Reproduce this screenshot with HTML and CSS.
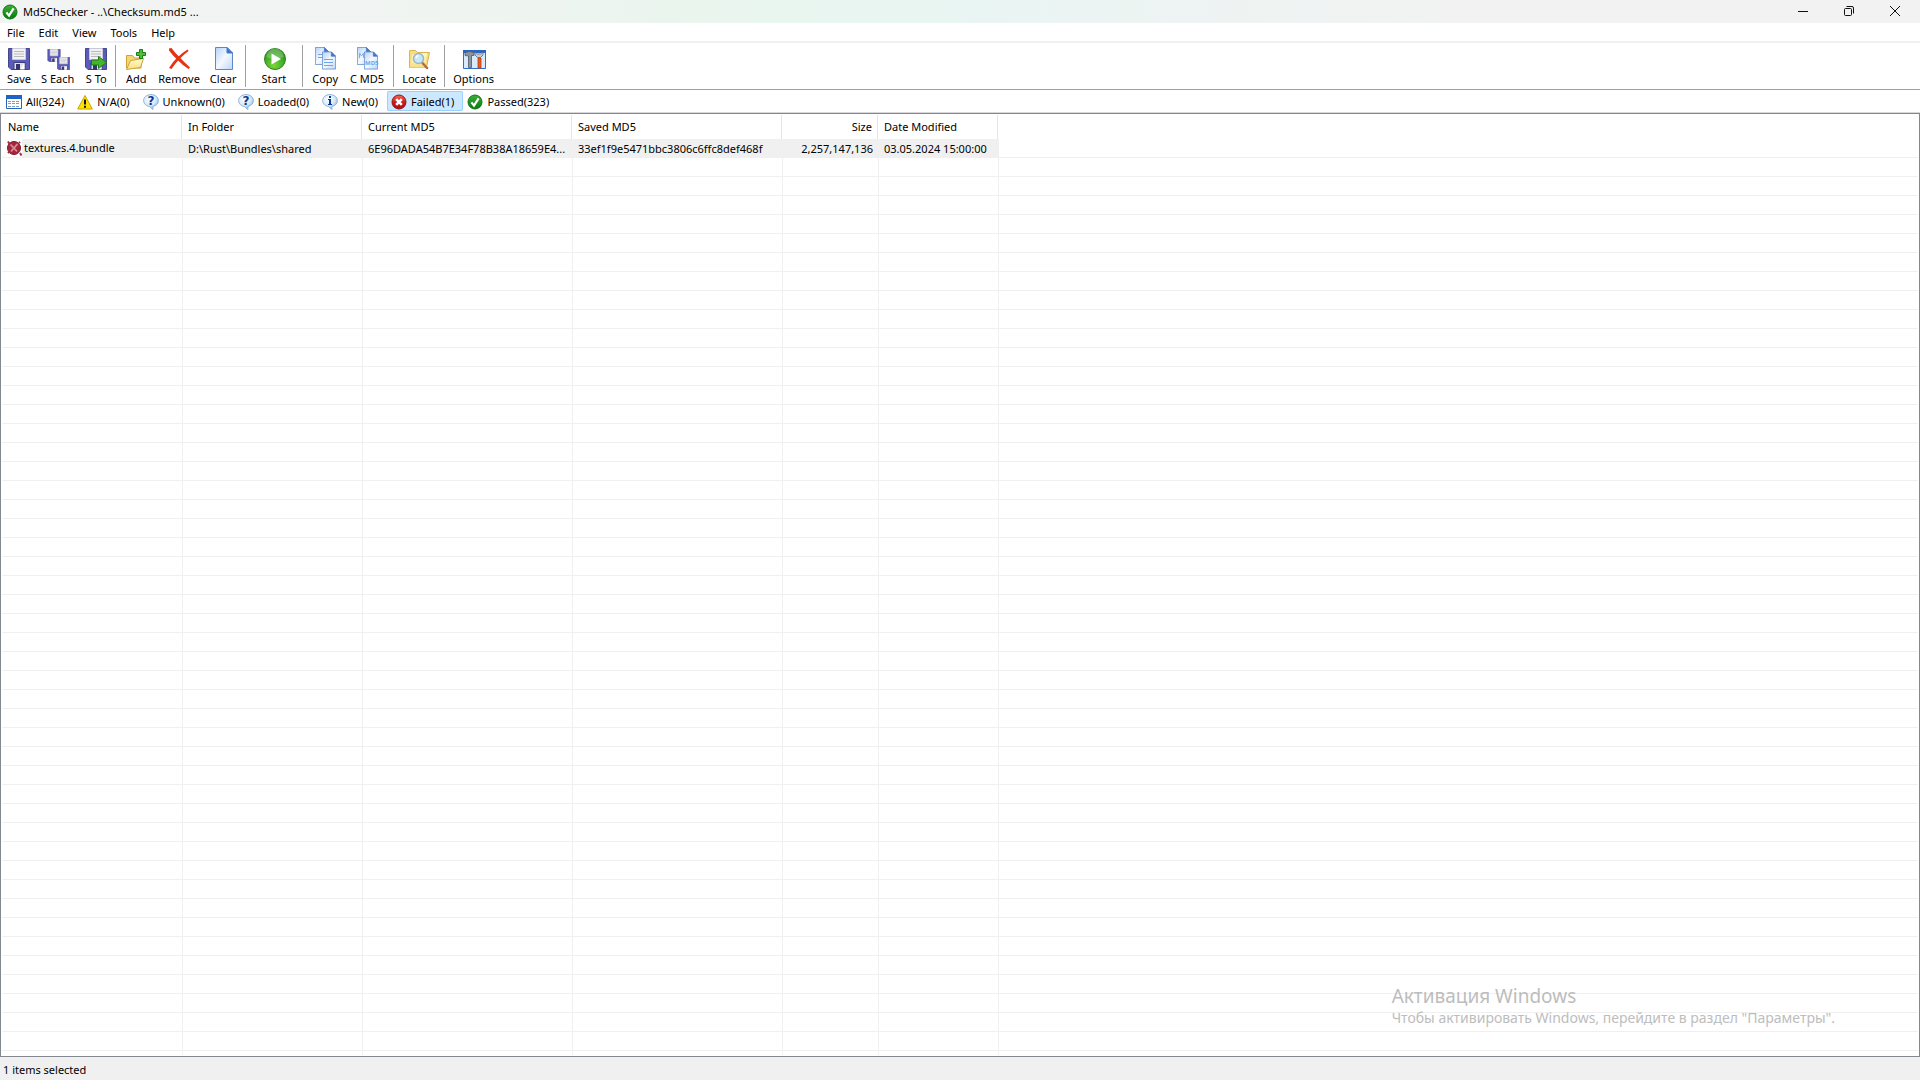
FILE: index.html
```html
<!DOCTYPE html>
<html lang="en">
<head>
    <meta charset="UTF-8">
    <meta name="viewport" content="width=device-width, initial-scale=1.0">
    <title>Md5Checker - ..\Checksum.md5 ...</title>
    <link rel="stylesheet" href="styles.css">
</head>
<body>
    <!-- shared icon shapes -->
    <svg class="defs" aria-hidden="true">
        <defs>
            <linearGradient id="greenBall" x1="0" y1="0" x2="0" y2="1">
                <stop offset="0" stop-color="#3fae3a"/>
                <stop offset="1" stop-color="#067a10"/>
            </linearGradient>
            <linearGradient id="redBall" x1="0" y1="0" x2="0" y2="1">
                <stop offset="0" stop-color="#f06a5c"/>
                <stop offset="0.5" stop-color="#d01c1c"/>
                <stop offset="1" stop-color="#a80c10"/>
            </linearGradient>
            <linearGradient id="paper" x1="0" y1="0" x2="1" y2="1">
                <stop offset="0" stop-color="#b4d2f8"/>
                <stop offset="0.5" stop-color="#f4f9ff"/>
                <stop offset="1" stop-color="#bcd6fa"/>
            </linearGradient>
            <linearGradient id="folderFill" x1="0" y1="0" x2="0" y2="1">
                <stop offset="0" stop-color="#fffbd0"/>
                <stop offset="1" stop-color="#f8de80"/>
            </linearGradient>
            <radialGradient id="bubbleFill" cx="0.4" cy="0.3" r="0.7">
                <stop offset="0" stop-color="#ffffff"/>
                <stop offset="0.6" stop-color="#d6e9fb"/>
                <stop offset="1" stop-color="#8fb9e6"/>
            </radialGradient>
            <radialGradient id="startFill" cx="0.45" cy="0.8" r="0.8">
                <stop offset="0" stop-color="#7ed63a"/>
                <stop offset="0.6" stop-color="#3fab25"/>
                <stop offset="1" stop-color="#2c8a1c"/>
            </radialGradient>
            <symbol id="check" viewBox="0 0 16 16">
                <circle cx="8" cy="8" r="7" fill="url(#greenBall)" stroke="#0c7a14"/>
                <path d="M4.4 8.4 7 11.6 11.6 4.4" fill="none" stroke="#fff" stroke-width="2.2"/>
            </symbol>
            <symbol id="cross" viewBox="0 0 16 16">
                <circle cx="8" cy="8" r="7" fill="url(#redBall)" stroke="#9c1014"/>
                <path d="M5.2 5.2 10.8 10.8M10.8 5.2 5.2 10.8" stroke="#fff" stroke-width="2.6"/>
            </symbol>
            <symbol id="bubble" viewBox="0 0 16 16">
                <path d="M8 .6C3.8.6.6 3.2.6 6.6c0 3.2 2.8 5.6 6.2 6L9.8 15.6 10 12.4c3.2-.7 5.4-3 5.4-5.8C15.4 3.200 12.2.6 8 .6Z" fill="url(#bubbleFill)" stroke="#8fb0d4"/>
            </symbol>
            <symbol id="floppy" viewBox="0 0 22 22">
                <path d="M.5.5h21v21H3L.5 19Z" fill="#5b5cb8" stroke="#45468f"/>
                <path d="M4.5.5h13v11h-13Z" fill="#f2f2f2" stroke="#c9c9dc"/>
                <path d="M6 3.5h10M6 6h10M6 8.5h10" stroke="#b9b9bd"/>
                <path d="M6 14.5h11v7H6Z" fill="#dfe2ea" stroke="#3b3c7c"/>
                <path d="M8 16h4v5.5H8Z" fill="#34356c"/>
                <path d="M12 21.5 16.5 15v6.5Z" fill="#fff"/>
            </symbol>
            <symbol id="page" viewBox="0 0 18 23">
                <path d="M.5.5H12L17.5 6v16.500H.5Z" fill="url(#paper)" stroke="#5f86c8"/>
                <path d="M12 .5V6h5.500Z" fill="#3f74cc" stroke="#4a78c4"/>
            </symbol>
        </defs>
    </svg>

    <header class="titlebar">
        <svg class="app-icon" viewBox="0 0 16 16"><use href="#check"/></svg>
        <h1>Md5Checker - ..\Checksum.md5 ...</h1>
        <div class="window-buttons">
            <button type="button" aria-label="Minimize"><svg viewBox="0 0 12 12"><path d="M1 6.500h10"/></svg></button>
            <button type="button" aria-label="Restore"><svg viewBox="0 0 12 12"><rect x="1.500" y="3.500" width="7" height="7" rx="1"/><path d="M3.500 1.500H9q1.500 0 1.500 1.500v5.500"/></svg></button>
            <button type="button" aria-label="Close"><svg viewBox="0 0 12 12"><path d="M1 1 11 11M11 1 1 11"/></svg></button>
        </div>
    </header>

    <nav class="menu">
        <button type="button">File</button>
        <button type="button">Edit</button>
        <button type="button">View</button>
        <button type="button">Tools</button>
        <button type="button">Help</button>
    </nav>

    <div class="toolbar">
        <div class="tool-group">
            <button type="button">
                <svg viewBox="0 0 24 24"><use href="#floppy" x="1" y="1" width="22" height="22"/></svg>
                Save
            </button>
            <button type="button">
                <svg viewBox="0 0 24 24"><use href="#floppy" x="1" y="2" width="14" height="13"/><use href="#floppy" x="11" y="10" width="13" height="13"/></svg>
                S Each
            </button>
            <button type="button">
                <svg viewBox="0 0 24 24"><use href="#floppy" x="1" y="1" width="22" height="22"/><path d="M7.5 13h7V9.500L22.500 15.500 14.500 21.500V18h-7Z" fill="#43b52c" stroke="#237a18"/></svg>
                S To
            </button>
        </div>
        <div class="tool-group">
            <button type="button">
                <svg viewBox="0 0 24 24">
                    <path d="M2.500 21V8.500h6l2 2.500H17v10Z" fill="#f5d772" stroke="#cfa33a"/>
                    <path d="M2.500 22.500 6.500 13.500 19.500 11.500 16.500 20.500Z" fill="url(#folderFill)" stroke="#cfa33a"/>
                    <path d="M15.500 2.500h3v3h3v3h-3v3h-3v-3h-3v-3h3Z" fill="#4cc038" stroke="#1a7d14"/>
                </svg>
                Add
            </button>
            <button type="button">
                <svg viewBox="0 0 24 24"><path d="M2 1.500 4.500 1C9 7 16 14 23 20.500L21.500 22C14 17 7 10 2 3.500Z" fill="#e63312"/><path d="M20.500 2.500 21.500 4C15 9 9 15 4.500 22L2 21C7 13 13 7 20.500 2.500Z" fill="#e63312"/></svg>
                Remove
            </button>
            <button type="button">
                <svg viewBox="0 0 24 24"><use href="#page" x="4" y="0" width="18" height="23"/></svg>
                Clear
            </button>
        </div>
        <div class="tool-group wide">
            <button type="button">
                <svg viewBox="0 0 24 24">
                    <circle cx="13" cy="12" r="10.500" fill="url(#startFill)" stroke="#2c8420"/>
                    <path d="M4.500 10a8.500 8.500 0 0 1 17 0c-5 2-12 2-17 0Z" fill="#fff" opacity=".25"/>
                    <path d="M9.500 6.500v11L19 12Z" fill="#fff"/>
                </svg>
                Start
            </button>
        </div>
        <div class="tool-group spaced">
            <button type="button">
                <svg viewBox="0 0 24 24">
                    <use href="#page" x="2" y="0" width="14" height="18"/>
                    <path d="M5 7.500h6M5 10.500h6" stroke="#6fa5ea"/>
                    <use href="#page" x="9" y="4" width="14" height="19"/>
                    <path d="M11 12.500h9M11 15.500h9M11 18.500h9" stroke="#6fa5ea"/>
                </svg>
                Copy
            </button>
            <button type="button">
                <svg viewBox="0 0 24 24">
                    <use href="#page" x="2" y="0" width="14" height="18"/>
                    <path d="M4.500 11V6l2 3 2-3v5" fill="none" stroke="#7eb0ea"/>
                    <use href="#page" x="9" y="4" width="14" height="19"/>
                    <text x="10" y="18" class="icon-md5">MD5</text>
                </svg>
                C MD5
            </button>
        </div>
        <div class="tool-group">
            <button type="button">
                <svg viewBox="0 0 24 24">
                    <path d="M2.500 20.500V3.500h6l2 2h12l-3 15Z" fill="#f8dc80" stroke="#dcb450"/>
                    <path d="M3 20.500 5.500 7.500 20 6l-2 14.500Z" fill="url(#folderFill)"/>
                    <path d="M15.500 16 20 21" stroke="#b0703c" stroke-width="2.500" stroke-linecap="round"/>
                    <circle cx="11.500" cy="11.500" r="5" fill="#c4e9fb" stroke="#9db6d0" stroke-width="1.500"/>
                    <path d="M9 11q.5-2 2.500-2.500" fill="none" stroke="#fff" stroke-width="1.500"/>
                </svg>
                Locate
            </button>
        </div>
        <div class="tool-group">
            <button type="button">
                <svg viewBox="0 0 24 24">
                    <path d="M1.500 3.500h22v18h-22Z" fill="#d9eafc" stroke="#2f6fc8"/>
                    <path d="M1 3h23v3H1Z" fill="#2467c9"/>
                    <path d="M3 5.500q4-2 9 0v3H9.500v12h-3V9L3 8.500Z" fill="#8c949c" stroke="#4f5a66" stroke-width=".8"/>
                    <path d="M13 5v3l2.500 2.500h3L21 8V5l-2.500 2h-3Z" fill="#c6ccd2" stroke="#5f6a76" stroke-width=".8"/>
                    <path d="M16 11h3v10h-3Z" fill="#ee5a1e" stroke="#b83c10" stroke-width=".8"/>
                </svg>
                Options
            </button>
        </div>
    </div>

    <div class="filters">
        <button type="button">
            <svg viewBox="0 0 16 16">
                <path d="M.5 1.500h15v13H.5Z" fill="#fff" stroke="#2a62b8"/>
                <path d="M0 1h16v4H0Z" fill="#1d63c8"/>
                <path d="M2 7.500h12M2 9.500h12M2 12.500h12" stroke="#7d9cc6" stroke-dasharray="3 1"/>
            </svg>
            All(324)
        </button>
        <button type="button">
            <svg viewBox="0 0 16 16">
                <path d="M8 1.500 15.300 15H.7Z" fill="#ffe100" stroke="#c9a400" stroke-linejoin="round"/>
                <path d="M8 5.500v5M8 11.800v2" stroke="#111" stroke-width="2"/>
            </svg>
            N/A(0)
        </button>
        <button type="button">
            <svg viewBox="0 0 16 16"><use href="#bubble"/><text x="8" y="11" class="icon-mark">?</text></svg>
            Unknown(0)
        </button>
        <button type="button">
            <svg viewBox="0 0 16 16"><use href="#bubble"/><text x="8" y="11" class="icon-mark">?</text></svg>
            Loaded(0)
        </button>
        <button type="button">
            <svg viewBox="0 0 16 16">
                <use href="#bubble"/>
                <path d="M7 2h2v2H7ZM6 5h3v5h1v1H6v-1h1V6H6Z" fill="#0a3a94"/>
            </svg>
            New(0)
        </button>
        <button type="button" class="active">
            <svg viewBox="0 0 16 16"><use href="#cross"/></svg>
            Failed(1)
        </button>
        <button type="button">
            <svg viewBox="0 0 16 16"><use href="#check"/></svg>
            Passed(323)
        </button>
    </div>

    <main class="list">
        <table>
            <colgroup>
                <col class="col-name">
                <col class="col-folder">
                <col class="col-md5">
                <col class="col-md5">
                <col class="col-size">
                <col class="col-date">
                <col>
            </colgroup>
            <thead>
                <tr>
                    <th>Name</th>
                    <th>In Folder</th>
                    <th>Current MD5</th>
                    <th>Saved MD5</th>
                    <th class="number">Size</th>
                    <th>Date Modified</th>
                    <td></td>
                </tr>
            </thead>
            <tbody>
                <tr class="selected">
                    <td>
                        <div class="file">
                            <svg viewBox="0 0 16 16">
                                <circle cx="8" cy="8" r="6.500" fill="#a3263c" stroke="#7c1c30"/>
                                <path d="M2 1.500 3.500 4M14 13l1.500 2.500M13 3l1-1M2 13l1-1" stroke="#a3263c" stroke-width="2"/>
                                <path d="M4.500 4.500 11 11.500M11.500 4 5 11.500" stroke="#d88b98" stroke-width="1.800"/>
                            </svg>
                            <span>textures.4.bundle</span>
                        </div>
                    </td>
                    <td>D:\Rust\Bundles\shared</td>
                    <td>6E96DADA54B7E34F78B38A18659E4...</td>
                    <td>33ef1f9e5471bbc3806c6ffc8def468f</td>
                    <td class="number">2,257,147,136</td>
                    <td>03.05.2024 15:00:00</td>
                    <td></td>
                </tr>
                <tr class="empty">
                    <td></td><td></td><td></td><td></td><td></td><td></td><td></td>
                </tr>
            </tbody>
        </table>
    </main>

    <footer class="status">1 items selected</footer>

    <aside class="watermark" lang="ru">
        <h2>Активация Windows</h2>
        <p>Чтобы активировать Windows, перейдите в раздел "Параметры".</p>
    </aside>
</body>
</html>
```
FILE: styles.css
```css
* {
    box-sizing: border-box;
}
body {
    display: flex;
    flex-direction: column;
    height: 100vh;
    margin: 0;
    overflow: hidden;
    background-color: #fff;
    color: #000;
    font-family: "Noto Sans", "Open Sans", sans-serif;
    font-size: 11px;
    line-height: 16px;
}
button {
    margin: 0;
    padding: 0;
    border: none;
    background: none;
    color: inherit;
    font: inherit;
    white-space: nowrap;
}
svg {
    display: block;
    flex: none;
}
.defs {
    position: absolute;
    width: 0;
    height: 0;
}

/* title bar */
.titlebar {
    display: flex;
    align-items: center;
    height: 23px;
    padding-left: 2px;
    background: linear-gradient(to right, #f2f4f4, #f1f4f2 20%, #eaf5ee 36%, #e9f5f2 50%, #f2f2f2 75%);
}
.app-icon {
    width: 16px;
    height: 16px;
}
.titlebar h1 {
    flex: 1;
    margin: 0 0 0 5px;
    font-size: 11px;
    font-weight: normal;
}
.window-buttons {
    display: flex;
    height: 100%;
}
.window-buttons button {
    display: flex;
    align-items: center;
    justify-content: center;
    width: 46px;
    padding-bottom: 2px;
}
.window-buttons svg {
    width: 12px;
    height: 12px;
    fill: none;
    stroke: #111;
}
.window-buttons {
    padding-right: 2px;
}

/* menu */
.menu {
    display: flex;
    gap: 14px;
    height: 20px;
    padding: 2px 7px 0;
    border-bottom: 2px solid #f0f0f0;
}

/* toolbar */
.toolbar {
    display: flex;
    height: 47px;
    padding: 2px 0;
    border-bottom: 1px solid #a0a0a0;
}
.tool-group {
    display: flex;
    padding: 0 3px;
    border-right: 1px solid #a0a0a0;
}
.tool-group:first-child {
    padding: 0 2px;
}
.tool-group.wide {
    padding: 0 11px;
}
.tool-group:last-child {
    border-right: none;
}
.tool-group button {
    display: flex;
    flex-direction: column;
    align-items: center;
    padding: 2px 5px 0;
}
.tool-group.spaced button {
    padding: 2px 6px 0;
}
.tool-group svg {
    width: 24px;
    height: 24px;
}
.icon-md5 {
    fill: #6fa5ea;
    font-size: 6px;
    font-weight: bold;
}

/* filters */
.filters {
    display: flex;
    height: 23px;
    padding: 1px 2px;
    border-bottom: 1px solid #d8d8dc;
}
.filters button {
    display: flex;
    align-items: center;
    gap: 4px;
    padding: 1px 9px 0 4px;
}
.filters .active {
    border-radius: 2px;
    background-color: #cce8ff;
    box-shadow: inset 0 0 0 1px #99d1ff;
}
.filters svg {
    width: 16px;
    height: 16px;
}
.icon-mark {
    fill: #0a3a94;
    font-family: "DejaVu Sans", sans-serif;
    font-size: 12px;
    font-weight: bold;
    text-anchor: middle;
}

/* file list */
.list {
    flex: 1;
    min-height: 0;
    padding: 1px;
    border: 1px solid #828790;
}
table {
    width: 100%;
    height: 100%;
    border-collapse: separate;
    border-spacing: 0;
    table-layout: fixed;
}
.col-name,
.col-folder {
    width: 180px;
}
.col-md5 {
    width: 210px;
}
.col-size {
    width: 96px;
}
.col-date {
    width: 120px;
}
th,
td {
    padding: 0;
    text-align: left;
    white-space: nowrap;
}
th {
    height: 24px;
    padding: 0 6px;
    border-right: 1px solid #e5e5e5;
    font-weight: normal;
}
tbody td {
    height: 19px;
    padding-top: 1px;
    padding-left: 5px;
    border-bottom: 1px solid #f0f0f0;
    border-left: 1px solid #f0f0f0;
}
tbody td:first-child {
    padding-top: 0;
    padding-left: 4px;
    border-left: none;
}
.number {
    padding-right: 5px;
    text-align: right;
}
.selected td:not(:first-child):not(:last-child),
.selected span {
    background-color: #f0f0f0;
}
.file {
    display: flex;
    align-items: center;
}
.file svg {
    width: 16px;
    height: 16px;
}
.file span {
    flex: 1;
    height: 18px;
    padding: 1px 0 0 2px;
}
.empty td {
    height: auto;
    border-bottom: none;
    background: repeating-linear-gradient(to bottom, transparent 0 18px, #f0f0f0 18px 19px);
}

/* status bar */
.status {
    height: 23px;
    padding: 5px 3px 0;
    background-color: #f0f0f0;
}

/* activation notice, floats over the window */
.watermark {
    position: absolute;
    right: 85px;
    bottom: 52px;
    color: #bdbdbd;
    pointer-events: none;
}
.watermark h2 {
    margin: 0;
    font-size: 19px;
    font-weight: normal;
    line-height: 24px;
}
.watermark p {
    margin: 0;
    font-size: 14px;
    line-height: 20px;
}
```
